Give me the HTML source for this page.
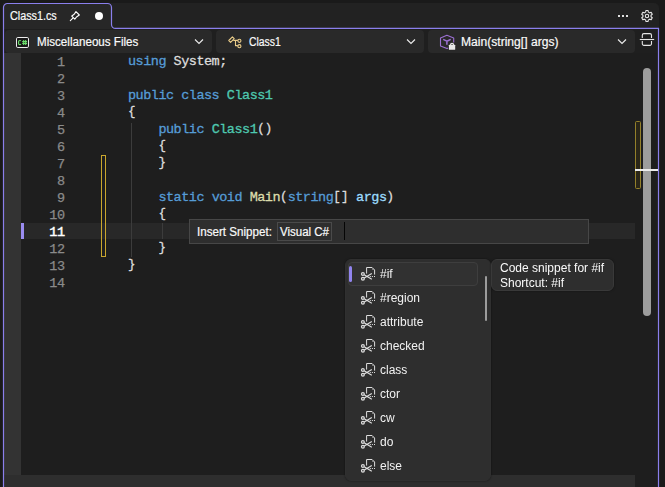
<!DOCTYPE html>
<html><head><meta charset="utf-8">
<style>
*{margin:0;padding:0;box-sizing:border-box}
html,body{width:665px;height:487px;overflow:hidden;background:#1a1a1a}
body{position:relative;font-family:"Liberation Sans",sans-serif;font-size:12px;color:#f0f0f0}
.abs{position:absolute}
.ui{-webkit-text-stroke:0.2px;position:absolute;transform-origin:0 50%;white-space:nowrap;font-size:12px;line-height:16px;color:#fafafa}
#strip{left:3px;top:3px;width:656px;height:26px;background:#222222;border-top-right-radius:5px}
#tab{left:3.5px;top:3.5px;width:108px;height:25.5px;background:#272727;border-top-left-radius:4px;border-top-right-radius:4px}
#main{left:4px;top:29px;width:654px;height:458px;background:#1f1f1f}
.dd{position:absolute;top:30px;height:22.5px;background:#292929;border-radius:4px}
#editor{left:21px;top:53px;width:637px;height:422px;background:#1e1e1e}
#margin{left:4px;top:53px;width:17px;height:422px;background:#333333}
#hbar{left:4px;top:475px;width:631px;height:12px;background:#2e2e2e}
#hcorner{left:635px;top:475px;width:23px;height:12px;background:#1e1e1e}
#curline{left:21px;top:223px;width:614px;height:16px;background:#282828}
#curmark{left:21px;top:223px;width:3px;height:16px;background:#9a8cf0}
.ln{-webkit-text-stroke:0.25px;position:absolute;left:29.5px;width:35px;text-align:right;font-family:"Liberation Mono",monospace;font-size:13.5px;line-height:17px;color:#8a8a8a;letter-spacing:-0.5px;white-space:pre}
.code{-webkit-text-stroke:0.3px;position:absolute;left:128px;font-family:"Liberation Mono",monospace;font-size:13.5px;line-height:17px;color:#dcdcdc;letter-spacing:-0.5px;white-space:pre}
.b{font-size:12.5px;letter-spacing:0.1px;position:relative;top:-1px}.k{color:#569cd6}.t{color:#4ec9b0}.m{color:#dcdcaa}.p{color:#9cdcfe}
.guide{position:absolute;width:1px;background:#3c3c3c}
#chg{left:101px;top:155px;width:5px;height:102px;border:1px solid #c8a62e}
#snip{left:189px;top:219px;width:400px;height:25px;background:#2e2e2e;border:1px solid #474747}
#lang{left:277px;top:222px;width:55px;height:19px;border:1px solid #4a4a4a;background:#2e2e2e}
#caret{left:344px;top:222px;width:1px;height:18px;background:#050505}
#pop{left:345px;top:259px;width:146px;height:222px;background:#2e2e2e;border:1px solid #303030;border-radius:6px;box-shadow:0 0 2px rgba(0,0,0,.55)}
#sel{left:348px;top:262px;width:130px;height:24px;background:#313131;border:1px solid #3e3e3e;border-radius:4px}
#selbar{left:349px;top:266px;width:3px;height:16px;background:#9184ee;border-radius:1.5px}
#popthumb{left:485px;top:276px;width:2px;height:45px;background:#9c9c9c;border-radius:1px}
.it{will-change:transform;position:absolute;left:380px;font-size:12px;line-height:16px;color:#f2f2f2;white-space:nowrap}
#tip{left:491px;top:259px;width:123px;height:32px;background:#2e2e2e;border:1px solid #393939;border-radius:6px;box-shadow:0 0 2px rgba(0,0,0,.5)}
#vthumb{left:643px;top:68px;width:8px;height:248px;background:#9d9d9d;border-radius:4px}
#vmark{left:635px;top:121px;width:6px;height:68px;border:1px solid #94802a;background:#2a2618;border-radius:1.5px}
#vcaret{left:635px;top:169px;width:23px;height:2px;background:#ededed}
</style></head><body>
<div class="abs" id="strip"></div>
<div class="abs" id="tab"></div>
<div class="abs" id="main"></div>
<div class="dd" style="left:5px;width:207px"></div>
<div class="dd" style="left:216px;width:208px"></div>
<div class="dd" style="left:428px;width:207px"></div>
<div class="abs" id="editor"></div>
<div class="abs" id="margin"></div>
<div class="abs" id="hbar"></div>
<div class="abs" id="hcorner"></div>
<div class="abs" id="curline"></div>
<div class="abs" id="curmark"></div>

<!-- purple outline -->
<svg class="abs" style="left:0;top:0" width="665" height="487" viewBox="0 0 665 487" fill="none">
<path d="M3.5 487 V7.5 A4 4 0 0 1 7.5 3.5 H107.5 A4 4 0 0 1 111.5 7.5 V24.4 A4 4 0 0 0 115.5 28.4 H658.5 V487" stroke="#8a7fec" stroke-width="1.2"/>
</svg>

<!-- tab content -->
<div class="ui" id="t_tab" style="transform:scaleX(0.898);left:10px;top:8px">Class1.cs</div>
<svg class="abs" style="left:69px;top:10px" width="12" height="12" viewBox="0 0 12 12" fill="none" stroke="#ffffff" stroke-width="1.1" stroke-linejoin="round" stroke-linecap="round">
<path d="M6.95 1.6 L10.35 5 L7.5 7 L5.8 9.2 L2.75 6.05 L5.2 4.3 Z"/><path d="M3.9 8.2 L1.3 10.7"/>
</svg>
<div class="abs" style="left:94.9px;top:11.7px;width:8.2px;height:8.2px;border-radius:50%;background:#ffffff"></div>

<!-- top right icons -->
<div class="abs" style="left:618px;top:15px;width:2px;height:2px;background:#dedede"></div>
<div class="abs" style="left:622px;top:15px;width:2px;height:2px;background:#dedede"></div>
<div class="abs" style="left:626px;top:15px;width:2px;height:2px;background:#dedede"></div>
<svg class="abs" style="left:640px;top:8.85px" width="14" height="14" viewBox="-7 -7 14 14" fill="none" stroke="#e6e6e6" stroke-width="1.1" stroke-linejoin="round">
<path d="M-1.37 -3.87 L-1.10 -5.44 L1.10 -5.44 L1.37 -3.87 L2.66 -3.12 L4.16 -3.67 L5.26 -1.76 L4.03 -0.75 L4.03 0.75 L5.26 1.76 L4.16 3.67 L2.66 3.12 L1.37 3.87 L1.10 5.44 L-1.10 5.44 L-1.37 3.87 L-2.66 3.12 L-4.16 3.67 L-5.26 1.76 L-4.03 0.75 L-4.03 -0.75 L-5.26 -1.76 L-4.16 -3.67 L-2.66 -3.12 Z"/>
<circle cx="0" cy="0" r="1.7"/>
</svg>

<!-- nav bar content -->
<svg class="abs" style="left:16px;top:37px" width="13" height="11" viewBox="0 0 13 11" fill="none">
<rect x="0.5" y="0.5" width="12" height="10" rx="1.3" fill="#181818" stroke="#ececec" stroke-width="1"/>
<path d="M4.9 3.9 Q4.5 3.45 3.8 3.45 Q2.6 3.45 2.6 4.6 V6.4 Q2.6 7.55 3.8 7.55 Q4.5 7.55 4.9 7.1" stroke="#6ce06c" stroke-width="1.15"/>
<path d="M7.7 3 V8 M9.7 3 V8 M6.2 4.6 H11.1 M6.2 6.4 H11.1" stroke="#6ce06c" stroke-width="1.05"/>
</svg>
<div class="ui" id="t_misc" style="transform:scaleX(0.968);left:37.3px;top:34.4px">Miscellaneous Files</div>
<svg class="abs ch" style="left:194px;top:38px" width="10" height="7" viewBox="0 0 10 7" fill="none" stroke="#ececec" stroke-width="1.1"><path d="M1 1.5 L5 5.5 L9 1.5"/></svg>

<svg class="abs" style="left:227px;top:34px" width="16" height="16" viewBox="0 0 16 16" fill="none" stroke="#ecce8a" stroke-width="1.1" stroke-linejoin="round">
<path d="M5.4 2.9 L7.2 4.7 L3.6 8.3 L1.8 6.5 Z"/>
<path d="M6.3 6.4 H10.8 M8.5 6.4 V11.6 H10.8"/>
<circle cx="12.4" cy="6.8" r="1.55"/><circle cx="12.4" cy="12.2" r="1.55"/>
</svg>
<div class="ui" id="t_class" style="transform:scaleX(0.864);left:249.3px;top:34.4px">Class1</div>
<svg class="abs ch" style="left:406px;top:38px" width="10" height="7" viewBox="0 0 10 7" fill="none" stroke="#ececec" stroke-width="1.1"><path d="M1 1.5 L5 5.5 L9 1.5"/></svg>

<svg class="abs" style="left:439px;top:33px" width="18" height="18" viewBox="0 0 18 18" fill="none">
<g stroke="#9c70d2" stroke-width="1.1" stroke-linejoin="round">
<path d="M14.7 9.6 V5 L7.9 2.3 L1.5 5 V12.9 L8 15.6 L9.4 15"/>
<path d="M4.2 6.4 L7.9 8.2 L11.7 6.4 M7.9 8.2 V11.7" stroke-width="1.5"/>
</g>
<rect x="9.3" y="10.9" width="7.5" height="6.6" rx="1.5" fill="#292929"/>
<rect x="9.9" y="11.8" width="6.3" height="5" rx="0.5" fill="#e8e8e8"/>
<path d="M11.5 12.3 V11.9 A1.55 1.55 0 0 1 14.6 11.9 V12.3" stroke="#e8e8e8" stroke-width="1.1"/>
</svg>
<div class="ui" id="t_main" style="transform:scaleX(1.008);left:461.3px;top:34.4px">Main(string[] args)</div>
<svg class="abs ch" style="left:617px;top:38px" width="10" height="7" viewBox="0 0 10 7" fill="none" stroke="#ececec" stroke-width="1.1"><path d="M1 1.5 L5 5.5 L9 1.5"/></svg>

<svg class="abs" style="left:639px;top:32px" width="16" height="16" viewBox="0 0 16 16" fill="none" stroke="#e6e6e6" stroke-width="1.1">
<path d="M3.3 5.9 V3.2 A1.6 1.6 0 0 1 4.9 1.6 H10.9 A1.6 1.6 0 0 1 12.5 3.2 V5.9"/>
<path d="M3.3 9.1 V11.8 A1.6 1.6 0 0 0 4.9 13.4 H10.9 A1.6 1.6 0 0 0 12.5 11.8 V9.1"/>
<path d="M0.8 7.5 H15.2"/>
</svg>

<!-- editor -->
<div class="guide" style="left:131px;top:123px;height:134px"></div>
<div class="guide" style="left:162px;top:223px;height:16px"></div>
<div class="abs" id="chg"></div>
<div class="ln" style="top:54px">1</div>
<div class="code" style="top:53px"><span class="k">using</span> System;</div>
<div class="ln" style="top:71px">2</div>
<div class="ln" style="top:88px">3</div>
<div class="code" style="top:87px"><span class="k">public</span> <span class="k">class</span> <span class="t">Class1</span></div>
<div class="ln" style="top:105px">4</div>
<div class="code" style="top:104px"><span class="b">{</span></div>
<div class="ln" style="top:122px">5</div>
<div class="code" style="top:121px">    <span class="k">public</span> <span class="t">Class1</span><span class="b">(</span><span class="b">)</span></div>
<div class="ln" style="top:139px">6</div>
<div class="code" style="top:138px">    <span class="b">{</span></div>
<div class="ln" style="top:156px">7</div>
<div class="code" style="top:155px">    <span class="b">}</span></div>
<div class="ln" style="top:173px">8</div>
<div class="ln" style="top:190px">9</div>
<div class="code" style="top:189px">    <span class="k">static</span> <span class="k">void</span> <span class="m">Main</span><span class="b">(</span><span class="k">string</span><span class="b">[</span><span class="b">]</span> <span class="p">args</span><span class="b">)</span></div>
<div class="ln" style="top:207px">10</div>
<div class="code" style="top:206px">    <span class="b">{</span></div>
<div class="ln" style="top:224px;color:#ffffff;-webkit-text-stroke:0.45px">11</div>
<div class="ln" style="top:241px">12</div>
<div class="code" style="top:240px">    <span class="b">}</span></div>
<div class="ln" style="top:258px">13</div>
<div class="code" style="top:257px"><span class="b">}</span></div>
<div class="ln" style="top:275px">14</div>

<!-- snippet bar -->
<div class="abs" id="snip"></div>
<div class="ui" id="t_ins" style="transform:scaleX(0.968);left:197px;top:224px">Insert Snippet:</div>
<div class="abs" id="lang"></div>
<div class="ui" id="t_lang" style="transform:scaleX(0.958);left:280px;top:224px">Visual C#</div>
<div class="abs" id="caret"></div>

<!-- popup -->
<div class="abs" id="pop"></div>
<div class="abs" id="sel"></div>
<div class="abs" id="selbar"></div>
<div class="abs" id="popthumb"></div>
<svg class="abs" style="left:360px;top:266px" width="16" height="16" viewBox="0 0 16 16" fill="none" stroke="#dedede" stroke-width="1" stroke-linejoin="round">
<path d="M6.6 7.6 V1.5 H12.1 L14.6 4 V8.6"/><path d="M12.3 2 V3.9 H14.2 Z" fill="#9a9a9a" stroke="none"/>
<circle cx="2.9" cy="7.9" r="1.4" stroke-width="1.25"/><circle cx="2.9" cy="12.8" r="1.4" stroke-width="1.25"/>
<path d="M4.2 8.7 L11.8 13.2 M4.2 12 L11.8 7.6" stroke-width="1.15"/>
<path d="M9.8 10.5 H15.2" stroke-dasharray="1 1.1"/>
</svg>
<div class="it" style="top:266px">#if</div>
<svg class="abs" style="left:360px;top:290px" width="16" height="16" viewBox="0 0 16 16" fill="none" stroke="#dedede" stroke-width="1" stroke-linejoin="round">
<path d="M6.6 7.6 V1.5 H12.1 L14.6 4 V8.6"/><path d="M12.3 2 V3.9 H14.2 Z" fill="#9a9a9a" stroke="none"/>
<circle cx="2.9" cy="7.9" r="1.4" stroke-width="1.25"/><circle cx="2.9" cy="12.8" r="1.4" stroke-width="1.25"/>
<path d="M4.2 8.7 L11.8 13.2 M4.2 12 L11.8 7.6" stroke-width="1.15"/>
<path d="M9.8 10.5 H15.2" stroke-dasharray="1 1.1"/>
</svg>
<div class="it" style="top:290px">#region</div>
<svg class="abs" style="left:360px;top:314px" width="16" height="16" viewBox="0 0 16 16" fill="none" stroke="#dedede" stroke-width="1" stroke-linejoin="round">
<path d="M6.6 7.6 V1.5 H12.1 L14.6 4 V8.6"/><path d="M12.3 2 V3.9 H14.2 Z" fill="#9a9a9a" stroke="none"/>
<circle cx="2.9" cy="7.9" r="1.4" stroke-width="1.25"/><circle cx="2.9" cy="12.8" r="1.4" stroke-width="1.25"/>
<path d="M4.2 8.7 L11.8 13.2 M4.2 12 L11.8 7.6" stroke-width="1.15"/>
<path d="M9.8 10.5 H15.2" stroke-dasharray="1 1.1"/>
</svg>
<div class="it" style="top:314px">attribute</div>
<svg class="abs" style="left:360px;top:338px" width="16" height="16" viewBox="0 0 16 16" fill="none" stroke="#dedede" stroke-width="1" stroke-linejoin="round">
<path d="M6.6 7.6 V1.5 H12.1 L14.6 4 V8.6"/><path d="M12.3 2 V3.9 H14.2 Z" fill="#9a9a9a" stroke="none"/>
<circle cx="2.9" cy="7.9" r="1.4" stroke-width="1.25"/><circle cx="2.9" cy="12.8" r="1.4" stroke-width="1.25"/>
<path d="M4.2 8.7 L11.8 13.2 M4.2 12 L11.8 7.6" stroke-width="1.15"/>
<path d="M9.8 10.5 H15.2" stroke-dasharray="1 1.1"/>
</svg>
<div class="it" style="top:338px">checked</div>
<svg class="abs" style="left:360px;top:362px" width="16" height="16" viewBox="0 0 16 16" fill="none" stroke="#dedede" stroke-width="1" stroke-linejoin="round">
<path d="M6.6 7.6 V1.5 H12.1 L14.6 4 V8.6"/><path d="M12.3 2 V3.9 H14.2 Z" fill="#9a9a9a" stroke="none"/>
<circle cx="2.9" cy="7.9" r="1.4" stroke-width="1.25"/><circle cx="2.9" cy="12.8" r="1.4" stroke-width="1.25"/>
<path d="M4.2 8.7 L11.8 13.2 M4.2 12 L11.8 7.6" stroke-width="1.15"/>
<path d="M9.8 10.5 H15.2" stroke-dasharray="1 1.1"/>
</svg>
<div class="it" style="top:362px">class</div>
<svg class="abs" style="left:360px;top:386px" width="16" height="16" viewBox="0 0 16 16" fill="none" stroke="#dedede" stroke-width="1" stroke-linejoin="round">
<path d="M6.6 7.6 V1.5 H12.1 L14.6 4 V8.6"/><path d="M12.3 2 V3.9 H14.2 Z" fill="#9a9a9a" stroke="none"/>
<circle cx="2.9" cy="7.9" r="1.4" stroke-width="1.25"/><circle cx="2.9" cy="12.8" r="1.4" stroke-width="1.25"/>
<path d="M4.2 8.7 L11.8 13.2 M4.2 12 L11.8 7.6" stroke-width="1.15"/>
<path d="M9.8 10.5 H15.2" stroke-dasharray="1 1.1"/>
</svg>
<div class="it" style="top:386px">ctor</div>
<svg class="abs" style="left:360px;top:410px" width="16" height="16" viewBox="0 0 16 16" fill="none" stroke="#dedede" stroke-width="1" stroke-linejoin="round">
<path d="M6.6 7.6 V1.5 H12.1 L14.6 4 V8.6"/><path d="M12.3 2 V3.9 H14.2 Z" fill="#9a9a9a" stroke="none"/>
<circle cx="2.9" cy="7.9" r="1.4" stroke-width="1.25"/><circle cx="2.9" cy="12.8" r="1.4" stroke-width="1.25"/>
<path d="M4.2 8.7 L11.8 13.2 M4.2 12 L11.8 7.6" stroke-width="1.15"/>
<path d="M9.8 10.5 H15.2" stroke-dasharray="1 1.1"/>
</svg>
<div class="it" style="top:410px">cw</div>
<svg class="abs" style="left:360px;top:434px" width="16" height="16" viewBox="0 0 16 16" fill="none" stroke="#dedede" stroke-width="1" stroke-linejoin="round">
<path d="M6.6 7.6 V1.5 H12.1 L14.6 4 V8.6"/><path d="M12.3 2 V3.9 H14.2 Z" fill="#9a9a9a" stroke="none"/>
<circle cx="2.9" cy="7.9" r="1.4" stroke-width="1.25"/><circle cx="2.9" cy="12.8" r="1.4" stroke-width="1.25"/>
<path d="M4.2 8.7 L11.8 13.2 M4.2 12 L11.8 7.6" stroke-width="1.15"/>
<path d="M9.8 10.5 H15.2" stroke-dasharray="1 1.1"/>
</svg>
<div class="it" style="top:434px">do</div>
<svg class="abs" style="left:360px;top:458px" width="16" height="16" viewBox="0 0 16 16" fill="none" stroke="#dedede" stroke-width="1" stroke-linejoin="round">
<path d="M6.6 7.6 V1.5 H12.1 L14.6 4 V8.6"/><path d="M12.3 2 V3.9 H14.2 Z" fill="#9a9a9a" stroke="none"/>
<circle cx="2.9" cy="7.9" r="1.4" stroke-width="1.25"/><circle cx="2.9" cy="12.8" r="1.4" stroke-width="1.25"/>
<path d="M4.2 8.7 L11.8 13.2 M4.2 12 L11.8 7.6" stroke-width="1.15"/>
<path d="M9.8 10.5 H15.2" stroke-dasharray="1 1.1"/>
</svg>
<div class="it" style="top:458px">else</div>
<div class="abs" id="tip"></div>
<div class="ui" id="t_tip1" style="will-change:transform;-webkit-text-stroke:0;left:500px;top:261px;line-height:15px">Code snippet for #if</div>
<div class="ui" id="t_tip2" style="will-change:transform;-webkit-text-stroke:0;left:500px;top:276px;line-height:15px">Shortcut: #if</div>

<!-- vertical scrollbar -->
<div class="abs" id="vmark"></div>
<div class="abs" id="vthumb"></div>
<div class="abs" id="vcaret"></div>
</body></html>
